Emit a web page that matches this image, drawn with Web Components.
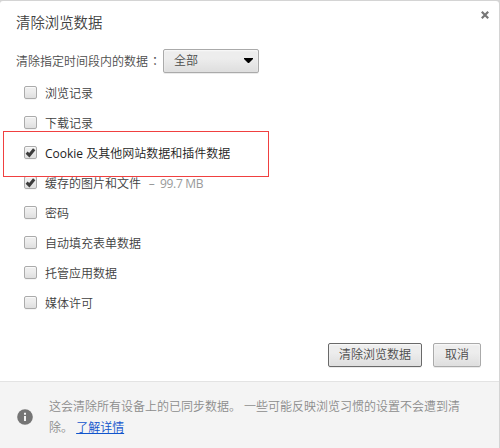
<!DOCTYPE html>
<html lang="zh-CN">
<head>
<meta charset="utf-8">
<title>清除浏览数据</title>
<style>
html,body{margin:0;height:100%;overflow:hidden;background:#d4d4d4}
body{font:12px/18px "Open Sans","Noto Sans CJK SC DemiLight","Noto Sans CJK SC Light","Noto Sans CJK SC",sans-serif;color:#404040}
</style>
</head>
<body>
<clear-dialog></clear-dialog>
<script>
function define(name, html) {
  const t = document.createElement('template');
  t.innerHTML = html;
  customElements.define(name, class extends HTMLElement {
    constructor() {
      super();
      this.attachShadow({mode: 'open'}).appendChild(t.content.cloneNode(true));
    }
  });
}

define('check-row', `<style>
:host{display:flex;align-items:center;height:30px;padding-left:24px;gap:8px}
.box{box-sizing:border-box;width:13px;height:13px;margin-bottom:2px;border:1px solid #ababab;border-radius:2px;background:linear-gradient(#ededed,#ededed 38%,#dedede);box-shadow:0 1px 0 rgba(0,0,0,.04),inset 0 1px 1px rgba(255,255,255,.75)}
svg{display:none;width:11px;height:11px;overflow:visible}
:host([checked]) svg{display:block}
.label{white-space:pre;margin-top:2px}
::slotted(small){font-size:12px;letter-spacing:-.3px;margin-left:2px;color:#999}
</style><span class="box"><svg viewBox="0 0 11 11"><path d="M1.6 5.7 4.3 8.2 9.2 2.2" fill="none" stroke="#3c3c3c" stroke-width="3"/></svg></span><span class="label"><slot></slot></span>`);

define('push-button', `<style>
:host{display:flex;box-sizing:border-box;height:24px;padding:0 11px;align-items:center;justify-content:center;border:1px solid #aaa;border-radius:2px;background:linear-gradient(#ededed,#ededed 38%,#dedede);box-shadow:0 1px 0 rgba(0,0,0,.08),inset 0 1px 2px rgba(255,255,255,.75);color:#4c4c4c}
:host([primary]){padding:0 10px;border-color:#696969}
</style><slot></slot>`);

define('drop-select', `<style>
:host{display:flex;box-sizing:border-box;width:96px;height:24px;padding:0 5px 0 10px;align-items:center;justify-content:space-between;border:1px solid #aaa;border-radius:2px;background:linear-gradient(#ededed,#ededed 38%,#dedede);box-shadow:0 1px 0 rgba(0,0,0,.08),inset 0 1px 2px rgba(255,255,255,.75);color:#4c4c4c}
svg{width:9px;height:5px;margin-top:-1px}
</style><slot></slot><svg viewBox="0 0 9 5"><path d="M0 0H9V1L5 5H4L0 1Z" fill="#000"/></svg>`);

define('sync-notice', `<style>
:host{display:flex;box-sizing:border-box;height:67px;border-top:1px solid #e3e3e3;background:#f4f4f4;color:#8c8c8c;padding:14px 30px 0 17px;line-height:21px}
svg{flex:none;width:16px;height:16px;margin:13px 16px 0 0}
</style><svg viewBox="0 0 16 16"><circle cx="8" cy="8" r="7.8" fill="#757575"/><path d="M7 3.8h2v2H7zM7 7h2v5H7z" fill="#f4f4f4"/></svg><div><slot></slot></div>`);

define('focus-frame', `<style>
:host{position:absolute;box-sizing:border-box;left:3px;top:130px;width:266px;height:46px;border:1px solid #f04040;pointer-events:none}
</style>`);

define('clear-dialog', `<style>
:host{display:flex;flex-direction:column;box-sizing:border-box;position:relative;width:499px;height:447px;margin-top:1px;background:#fff;border-radius:3px 3px 0 0;overflow:hidden}
header{display:flex;justify-content:space-between;height:42px;padding:0 10px 0 16px}
h1{margin:12px 0 0;font-size:14.4px;line-height:20px;font-weight:400}
.close{width:8px;height:8px;margin-top:10px}
.range{display:flex;align-items:center;height:36px;padding:0 0 0 16px;gap:3px;color:#4c4c4c}
.colon{display:inline-block;width:12px;text-indent:1px;white-space:nowrap;font-family:"Noto Sans CJK TC",sans-serif;line-height:18px}
.rows{display:flex;flex-direction:column;margin-top:-1px}
.actions{display:flex;justify-content:flex-end;gap:11px;padding:0 18px 0 0;margin:auto 0 14px}
.rest{white-space:nowrap}
a{color:#15c;text-decoration:underline}
</style>
<header><h1>清除浏览数据</h1><svg class="close" viewBox="0 0 8 8"><path d="M.8.8 7.2 7.2M7.2.8.8 7.2" stroke="#777" stroke-width="2.2"/></svg></header>
<div class="range"><span>清除指定时间段内的数据<span class="colon" lang="zh-TW">：</span></span><drop-select>全部</drop-select></div>
<div class="rows">
<check-row>浏览记录</check-row>
<check-row>下载记录</check-row>
<check-row checked style="color:#1c1c1c">Cookie 及其他网站数据和插件数据</check-row>
<check-row checked>缓存的图片和文件<small>  –  99.7 MB</small></check-row>
<check-row>密码</check-row>
<check-row>自动填充表单数据</check-row>
<check-row>托管应用数据</check-row>
<check-row>媒体许可</check-row>
</div>
<div class="actions"><push-button primary>清除浏览数据</push-button><push-button>取消</push-button></div>
<sync-notice>这会清除所有设备上的已同步数据。 一些可能反映浏览习惯的设置不会遭到清<span class="rest"><wbr>除。 <a>了解详情</a></span></sync-notice>
<focus-frame></focus-frame>`);
</script>
</body>
</html>
